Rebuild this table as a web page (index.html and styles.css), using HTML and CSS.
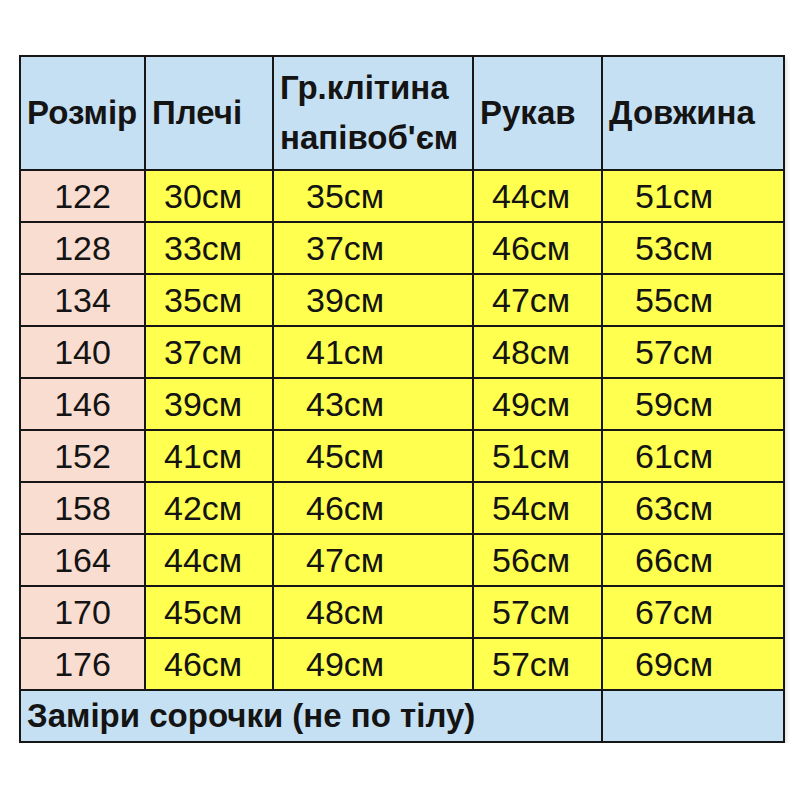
FILE: index.html
```html
<!DOCTYPE html>
<html lang="uk">
<head>
<meta charset="utf-8">
<title>Розмірна сітка</title>
<link rel="stylesheet" href="styles.css">
</head>
<body>
<table class="sizes">
  <colgroup>
    <col class="c1"><col class="c2"><col class="c3"><col class="c4"><col class="c5">
  </colgroup>
  <thead>
    <tr class="head">
      <th>Розмір</th>
      <th>Плечі</th>
      <th>Гр.клітина<br>напівоб'єм</th>
      <th>Рукав</th>
      <th>Довжина</th>
    </tr>
  </thead>
  <tbody>
    <tr><td class="size">122</td><td class="p2">30см</td><td class="p3">35см</td><td class="p4">44см</td><td class="p5">51см</td></tr>
    <tr><td class="size">128</td><td class="p2">33см</td><td class="p3">37см</td><td class="p4">46см</td><td class="p5">53см</td></tr>
    <tr><td class="size">134</td><td class="p2">35см</td><td class="p3">39см</td><td class="p4">47см</td><td class="p5">55см</td></tr>
    <tr><td class="size">140</td><td class="p2">37см</td><td class="p3">41см</td><td class="p4">48см</td><td class="p5">57см</td></tr>
    <tr><td class="size">146</td><td class="p2">39см</td><td class="p3">43см</td><td class="p4">49см</td><td class="p5">59см</td></tr>
    <tr><td class="size">152</td><td class="p2">41см</td><td class="p3">45см</td><td class="p4">51см</td><td class="p5">61см</td></tr>
    <tr><td class="size">158</td><td class="p2">42см</td><td class="p3">46см</td><td class="p4">54см</td><td class="p5">63см</td></tr>
    <tr><td class="size">164</td><td class="p2">44см</td><td class="p3">47см</td><td class="p4">56см</td><td class="p5">66см</td></tr>
    <tr><td class="size">170</td><td class="p2">45см</td><td class="p3">48см</td><td class="p4">57см</td><td class="p5">67см</td></tr>
    <tr><td class="size">176</td><td class="p2">46см</td><td class="p3">49см</td><td class="p4">57см</td><td class="p5">69см</td></tr>
  </tbody>
  <tfoot>
    <tr class="foot"><td colspan="4" class="note">Заміри сорочки (не по тілу)</td><td class="blank"></td></tr>
  </tfoot>
</table>
</body>
</html>
```

FILE: styles.css
```css
html, body {
  margin: 0;
  padding: 0;
  background: #ffffff;
}

body {
  padding: 55px 0 0 19px;
  font-family: "Liberation Sans", Arial, sans-serif;
  color: #141414;
}

.sizes {
  border-collapse: collapse;
  table-layout: fixed;
  width: 764px;
  box-shadow: 2px 3px 4px rgba(0, 0, 0, 0.12);
}

.c1 { width: 125px; }
.c2 { width: 128px; }
.c3 { width: 200px; }
.c4 { width: 129px; }
.c5 { width: 182px; }

.sizes th,
.sizes td {
  border: 2px solid #161616;
  padding: 0;
  vertical-align: middle;
  white-space: nowrap;
}

.head {
  height: 114px;
}

.head th {
  background: #c6e0f3;
  font-size: 33px;
  font-weight: bold;
  text-align: left;
  padding-left: 6px;
  line-height: 50px;
}

tbody tr {
  height: 52px;
}

tbody td {
  background: #ffff4f;
  font-size: 34px;
  line-height: 40px;
}

.size {
  background: #f9ddd1 !important;
  text-align: center;
}

.p2 { padding-left: 18px !important; }
.p3 { padding-left: 32px !important; }
.p4 { padding-left: 18px !important; }
.p5 { padding-left: 32px !important; }

.foot {
  height: 52px;
}

.foot td {
  background: #c6e0f3;
}

.note {
  font-size: 33px;
  font-weight: bold;
  line-height: 40px;
  padding-left: 6px !important;
}
```
